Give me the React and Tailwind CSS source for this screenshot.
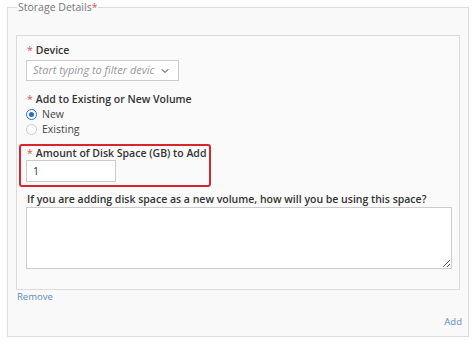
import React from 'react';
import { ChevronDown } from 'lucide-react';

const font = { fontFamily: '"Open Sans", "Noto Sans", sans-serif' };

const Label = ({ children, className = '' }) => (
    <div className={`text-[10.5px] leading-[14px] font-semibold text-[#333] whitespace-nowrap ${className}`}>
        <span className="text-[#d9534f] font-normal mr-[3px]">*</span>
        {children}
    </div>
);

const Radio = ({ checked, label }) => (
    <label className="flex items-center h-[15px] text-[10.5px] text-[#444] -ml-[1px]">
        <span
            className={`w-[11px] h-[11px] rounded-full border flex items-center justify-center mr-[5px] ${
                checked ? 'border-[#2a6ebb] bg-white' : 'border-[#ccc] bg-white'
            }`}
        >
            {checked && <span className="w-[5px] h-[5px] rounded-full bg-[#2a6ebb]" />}
        </span>
        {label}
    </label>
);

export default function App() {
    return (
        <div className="w-[474px] h-[341px] bg-white pl-[7px]" style={font}>
            <fieldset className="w-[462px] h-[337px] border border-[#dcdcdc] bg-[#f9f9f9] px-[8px]">
                <legend className="ml-[1px] px-[1px] text-[10.5px] leading-[14px] text-[#777]">
                    Storage Details<span className="text-[#d9534f]">*</span>
                </legend>

                {/* inner panel */}
                <div className="mt-[21px] w-[444px] h-[255px] border border-[#dcdcdc] bg-[#fafafa] pl-[10px] pt-[7px]">
                    <Label>Device</Label>
                    <div className="-ml-[1px] mt-[3px] w-[153px] h-[21px] border border-[#ccc] bg-white flex items-center pl-[6px] pr-[7px]">
                        <span className="flex-1 text-[11px] italic text-[#999] whitespace-nowrap overflow-hidden">
                            Start typing to filter devices
                        </span>
                        <ChevronDown size={12} strokeWidth={2} className="text-[#333] ml-[4px]" />
                    </div>

                    <Label className="mt-[11px]">Add to Existing or New Volume</Label>
                    <div className="mt-[1px]">
                        <Radio checked label="New" />
                        <Radio label="Existing" />
                    </div>

                    <div className="-ml-[8px] mt-[7px] w-[192px] h-[43px] border-2 border-[#d9262c] rounded-[3px] pl-[6px]">
                        <Label>Amount of Disk Space (GB) to Add</Label>
                        <div className="-ml-[1px] w-[90px] h-[22px] border border-[#ccc] bg-white text-[10.5px] text-[#333] pl-[6px] leading-[20px]">
                            1
                        </div>
                    </div>

                    <div className="mt-[5px] text-[10.5px] leading-[14px] font-semibold text-[#333] whitespace-nowrap">
                        If you are adding disk space as a new volume, how will you be using this space?
                    </div>
                    <textarea className="block -ml-[1px] mt-[1px] w-[426px] h-[62px] border border-[#ccc] bg-white" />
                </div>

                <div className="text-[9.5px] leading-[14px] text-[#5b8cc9] pl-[1px]">Remove</div>
                <div className="mt-[11px] -mr-[2px] text-[9.5px] leading-[14px] text-[#5b8cc9] text-right">Add</div>
            </fieldset>
        </div>
    );
}
